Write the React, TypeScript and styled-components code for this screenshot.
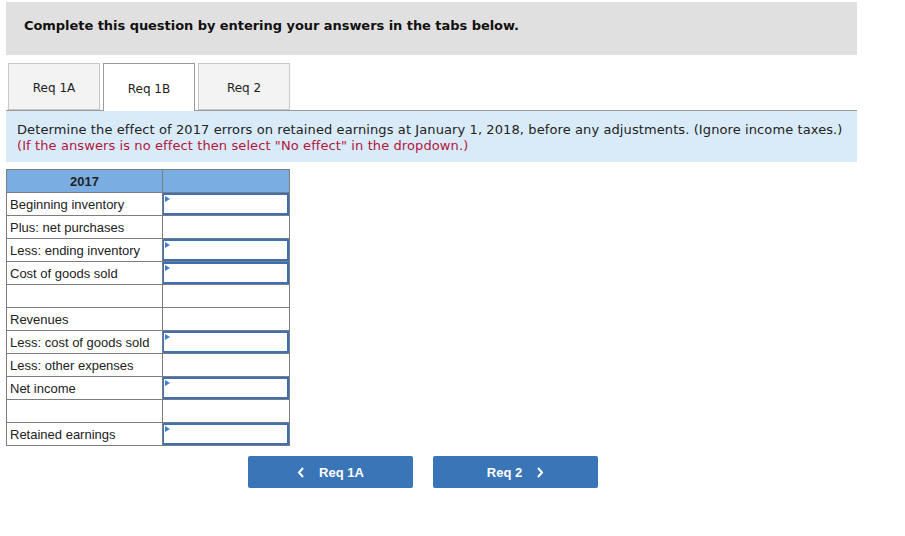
import React from "react";
import styled, { createGlobalStyle } from "styled-components";

const GlobalStyle = createGlobalStyle`
  body {
    margin: 0;
    background: #ffffff;
    font-family: "DejaVu Sans", Verdana, sans-serif;
  }
`;

const Page = styled.div`
  width: 851px;
  padding: 2px 0 0 6px;
`;

const Banner = styled.div`
  height: 53px;
  background: #e0e0e0;
  padding-left: 18px;
  display: flex;
  align-items: center;
  font-size: 13px;
  font-weight: bold;
  color: #111;
  box-sizing: border-box;
  padding-bottom: 6px;
  letter-spacing: -0.05px;
`;

const TabBar = styled.div`
  display: flex;
  gap: 3px;
  margin-top: 8px;
  padding-left: 2px;
  border-bottom: 1px solid #9a9a9a;
  height: 47px;
  box-sizing: content-box;
`;

const Tab = styled.div<{ $active?: boolean }>`
  width: 92px;
  height: ${(p) => (p.$active ? "48px" : "47px")};
  box-sizing: border-box;
  display: flex;
  align-items: center;
  justify-content: center;
  padding-top: 2px;
  font-size: 12px;
  color: #222;
  background: ${(p) => (p.$active ? "#ffffff" : "#f3f3f3")};
  border: 1px solid ${(p) => (p.$active ? "#9a9a9a" : "#c8c8c8")};
  border-bottom: ${(p) => (p.$active ? "none" : "1px solid #c8c8c8")};
  position: relative;
  z-index: ${(p) => (p.$active ? 1 : 0)};
`;

const Instructions = styled.div`
  background: #d9ebf9;
  padding: 11px 11px 8px;
  font-size: 13px;
  line-height: 16px;
  letter-spacing: 0.1px;
  color: #222;
`;

const Note = styled.div`
  color: #b3163c;
`;

const Table = styled.table`
  border-collapse: collapse;
  margin-top: 7px;
  font-family: "Liberation Sans", Arial, sans-serif;
  font-size: 13px;
  color: #222;
`;

const HeadCell = styled.th`
  background: #7aaee3;
  border: 1px solid #7d7d7d;
  height: 22px;
  padding: 0;
  font-weight: bold;
  font-size: 13px;
  text-align: center;
`;

const LabelCell = styled.td`
  width: 156px;
  height: 22px;
  border: 1px solid #7d7d7d;
  padding: 1px 0 0 3px;
  box-sizing: border-box;
  white-space: nowrap;
`;

const ValueCell = styled.td`
  width: 126px;
  height: 22px;
  border: 1px solid #7d7d7d;
  padding: 0;
  position: relative;
`;

const Field = styled.div`
  position: absolute;
  inset: 0 0 0 0;
  border: 2px solid #3d6fb4;
  border-left-width: 1px;
  background: #fff;
`;

const Marker = styled.span`
  position: absolute;
  left: 1px;
  top: 1px;
  width: 0;
  height: 0;
  border-top: 3px solid transparent;
  border-bottom: 3px solid transparent;
  border-left: 5px solid #3d7fd0;
`;

const NavRow = styled.div`
  display: flex;
  gap: 20px;
  padding-left: 242px;
  margin-top: 10px;
`;

const NavButton = styled.button`
  width: 165px;
  height: 32px;
  border: none;
  border-radius: 2px;
  background: #3a75b8;
  color: #fff;
  font-family: "Liberation Sans", Arial, sans-serif;
  font-weight: bold;
  font-size: 13px;
  display: flex;
  align-items: center;
  justify-content: center;
  gap: 14px;
  padding: 0;
`;

const Chevron = ({ dir }: { dir: "left" | "right" }) => (
  <svg width="8" height="11" viewBox="0 0 8 11">
    <path
      d={dir === "left" ? "M6 1 L2 5.5 L6 10" : "M2 1 L6 5.5 L2 10"}
      fill="none"
      stroke="#fff"
      strokeWidth="2"
    />
  </svg>
);

const rows: { label: string; input: boolean }[] = [
  { label: "Beginning inventory", input: true },
  { label: "Plus: net purchases", input: false },
  { label: "Less: ending inventory", input: true },
  { label: "Cost of goods sold", input: true },
  { label: "", input: false },
  { label: "Revenues", input: false },
  { label: "Less: cost of goods sold", input: true },
  { label: "Less: other expenses", input: false },
  { label: "Net income", input: true },
  { label: "", input: false },
  { label: "Retained earnings", input: true },
];

const App: React.FunctionComponent = () => (
  <>
    <GlobalStyle />
    <Page>
      <Banner>Complete this question by entering your answers in the tabs below.</Banner>
      <TabBar>
        <Tab>Req 1A</Tab>
        <Tab $active>Req 1B</Tab>
        <Tab>Req 2</Tab>
      </TabBar>
      <Instructions>
        <div>
          Determine the effect of 2017 errors on retained earnings at January 1, 2018, before any
          adjustments. (Ignore income taxes.)
        </div>
        <Note>(If the answers is no effect then select "No effect" in the dropdown.)</Note>
      </Instructions>
      <Table>
        <thead>
          <tr>
            <HeadCell>2017</HeadCell>
            <HeadCell></HeadCell>
          </tr>
        </thead>
        <tbody>
          {rows.map((row, i) => (
            <tr key={i}>
              <LabelCell>{row.label}</LabelCell>
              <ValueCell>
                {row.input && (
                  <Field>
                    <Marker />
                  </Field>
                )}
              </ValueCell>
            </tr>
          ))}
        </tbody>
      </Table>
      <NavRow>
        <NavButton>
          <Chevron dir="left" />
          Req 1A
        </NavButton>
        <NavButton>
          Req 2
          <Chevron dir="right" />
        </NavButton>
      </NavRow>
    </Page>
  </>
);

export default App;
